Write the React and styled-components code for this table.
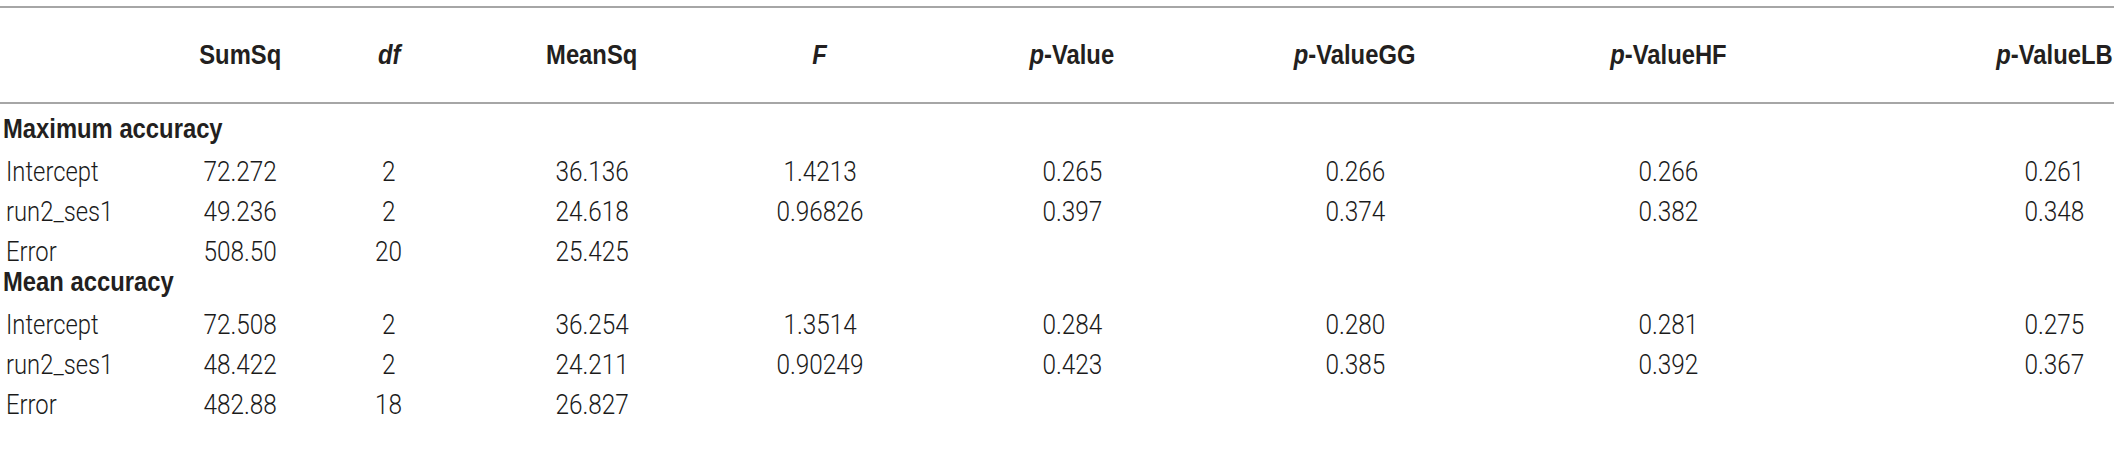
import React from 'react';
import styled, { createGlobalStyle } from 'styled-components';

const GlobalStyle = createGlobalStyle`
  body {
    margin: 0;
    background: #ffffff;
  }
`;

// column centres (px) of the value columns, measured off the printed table
const CENTERS = [240, 389, 592, 820, 1072, 1355, 1668, 2054];
const LABEL_W = 170;
const COL_W = 120;

const buildTemplate = () => {
  const parts = [`${LABEL_W}px`];
  let prev = LABEL_W;
  CENTERS.forEach(c => {
    const start = c - COL_W / 2;
    parts.push(`${start - prev}px`, `${COL_W}px`);
    prev = start + COL_W;
  });
  return parts.join(' ');
};

const TEMPLATE = buildTemplate();

const Page = styled.div`
  width: 2114px;
  padding-top: 6px;
  color: #231f20;
`;

const HeaderRow = styled.div`
  display: grid;
  grid-template-columns: ${TEMPLATE};
  align-items: center;
  height: 94px;
  border-top: 2px solid #a6a6a6;
  border-bottom: 2px solid #a6a6a6;
  font-family: "Liberation Sans", Arial, sans-serif;
  font-weight: 700;
  font-size: 28px;
`;

const Body = styled.div`
  padding-top: 14px;
`;

const SectionRow = styled.div`
  height: 33px;
  line-height: 22px;
  padding-left: 3px;
  font-family: "Liberation Sans", Arial, sans-serif;
  font-weight: 700;
  font-size: 28px;
`;

const DataRow = styled.div`
  display: grid;
  grid-template-columns: ${TEMPLATE};
  align-items: center;
  height: 40px;
  font-family: Roboto, "Liberation Sans", Arial, sans-serif;
  font-weight: 300;
  font-size: 28px;
  color: #1a1a1a;
`;

const Label = styled.div`
  grid-column: 1;
  padding-left: 6px;
  white-space: nowrap;
`;

const Cell = styled.div`
  grid-column: ${p => 3 + 2 * p.$col};
  display: flex;
  justify-content: center;
  white-space: nowrap;
`;

// the print face is a condensed grotesque; squeeze the installed one to fit
const Text = styled.span`
  display: inline-block;
  flex-shrink: 0;
  transform: scaleX(${p => p.$squeeze || 0.86});
  transform-origin: ${p => (p.$left ? 'left center' : 'center')};
`;

const columns = [
  <>SumSq</>,
  <i>df</i>,
  <>MeanSq</>,
  <i>F</i>,
  <><i>p</i>-Value</>,
  <><i>p</i>-ValueGG</>,
  <><i>p</i>-ValueHF</>,
  <><i>p</i>-ValueLB</>,
];

const sections = [
  {
    title: 'Maximum accuracy',
    rows: [
      ['Intercept', '72.272', '2', '36.136', '1.4213', '0.265', '0.266', '0.266', '0.261'],
      ['run2_ses1', '49.236', '2', '24.618', '0.96826', '0.397', '0.374', '0.382', '0.348'],
      ['Error', '508.50', '20', '25.425'],
    ],
  },
  {
    title: 'Mean accuracy',
    rows: [
      ['Intercept', '72.508', '2', '36.254', '1.3514', '0.284', '0.280', '0.281', '0.275'],
      ['run2_ses1', '48.422', '2', '24.211', '0.90249', '0.423', '0.385', '0.392', '0.367'],
      ['Error', '482.88', '18', '26.827'],
    ],
  },
];

const App = () => {
  return (
    <Page>
      <GlobalStyle />
      <HeaderRow>
        <Label />
        {columns.map((col, i) => (
          <Cell key={i} $col={i}>
            <Text $squeeze={0.85}>{col}</Text>
          </Cell>
        ))}
      </HeaderRow>
      <Body>
        {sections.map(section => (
          <React.Fragment key={section.title}>
            <SectionRow>
              <Text $left $squeeze={0.85}>{section.title}</Text>
            </SectionRow>
            {section.rows.map((row, r) => (
              <DataRow key={r}>
                <Label>
                  <Text $left $squeeze={0.85}>{row[0]}</Text>
                </Label>
                {row.slice(1).map((val, i) => (
                  <Cell key={i} $col={i}>
                    <Text $squeeze={0.87}>{val}</Text>
                  </Cell>
                ))}
              </DataRow>
            ))}
          </React.Fragment>
        ))}
      </Body>
    </Page>
  );
};

export default App;
